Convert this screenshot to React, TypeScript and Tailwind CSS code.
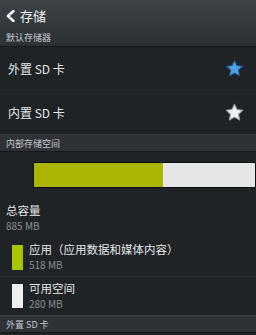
import React from "react";

const Star = ({ fill, stroke }: { fill: string; stroke: string }) => (
  <svg width="21" height="21" viewBox="0 0 24 24">
    <path
      d="M12 2.5l2.9 6.1 6.6.8-4.9 4.6 1.3 6.6L12 17.3l-5.9 3.3 1.3-6.6-4.9-4.6 6.6-.8z"
      fill={fill}
      stroke={stroke}
      strokeWidth="1.2"
      strokeLinejoin="round"
    />
  </svg>
);

const SectionHeader = ({ label }: { label: string }) => (
  <div className="h-[18px] flex items-center px-[6px] bg-[#2e3236] border-t border-[#3a3f43] border-b border-b-[#15181a]">
    <span className="text-[9px] leading-none text-[#c4c8cc]">{label}</span>
  </div>
);

export default function App() {
  return (
    <div
      className="w-[256px] h-[335px] overflow-hidden bg-[#1f2326] flex flex-col"
      style={{ fontFamily: '"Noto Sans CJK SC", "Noto Sans", sans-serif' }}
    >
      <div className="h-[47px] bg-gradient-to-b from-[#3d4348] to-[#2b3034] border-b border-[#15181a] flex flex-col">
        <div className="h-[30px] flex items-center pl-[6px] gap-[5px] pt-[2px]">
          <svg width="9" height="12" viewBox="0 0 9 12">
            <path d="M7.5 1L2 6l5.5 5" fill="none" stroke="#f2f2f2" strokeWidth="2.6" strokeLinecap="round" strokeLinejoin="round" />
          </svg>
          <span className="text-[13px] leading-none text-[#f0f0f0]">存储</span>
        </div>
        <div className="h-[17px] flex items-center px-[6px]">
          <span className="text-[9px] leading-none text-[#c8ccd0]">默认存储器</span>
        </div>
      </div>
      <div className="h-[44px] flex items-center justify-between pl-[8px] pr-[11px] border-b border-[#262a2e]">
        <span className="text-[12px] leading-none text-[#e4e6e8]">外置 SD 卡</span>
        <Star fill="#4e9fe6" stroke="#1c4b78" />
      </div>
      <div className="h-[43px] flex items-center justify-between pl-[8px] pr-[11px]">
        <span className="text-[12px] leading-none text-[#e4e6e8]">内置 SD 卡</span>
        <Star fill="#eef1f2" stroke="#9aa0a4" />
      </div>
      <SectionHeader label="内部存储空间" />
      <div className="h-[46px] flex items-center pl-[33px]">
        <div className="flex w-full h-[26px] border border-[#0c0e0f]">
          <div className="w-[129px] h-full bg-[#a9b500]" />
          <div className="flex-1 h-full bg-[#e6e6e8]" />
        </div>
      </div>
      <div className="h-[40px] flex flex-col justify-center pl-[6px] gap-[4px]">
        <span className="text-[11.5px] leading-none text-[#e4e6e8]">总容量</span>
        <span className="text-[10px] leading-none text-[#8a8e92]">885 MB</span>
      </div>
      <div className="h-[39px] flex items-center pl-[12px] gap-[6px] border-b border-[#2e3236]">
        <div className="w-[11px] h-[25px] bg-[#a9c400]" />
        <div className="flex flex-col gap-[4px]">
          <span className="text-[11.5px] leading-none text-[#e4e6e8]">应用（应用数据和媒体内容）</span>
          <span className="text-[10px] leading-none text-[#8a8e92]">518 MB</span>
        </div>
      </div>
      <div className="h-[38px] flex items-center pl-[12px] gap-[6px]">
        <div className="w-[11px] h-[24px] bg-[#eceef0]" />
        <div className="flex flex-col gap-[4px]">
          <span className="text-[11.5px] leading-none text-[#e4e6e8]">可用空间</span>
          <span className="text-[10px] leading-none text-[#8a8e92]">280 MB</span>
        </div>
      </div>
      <SectionHeader label="外置 SD 卡" />
    </div>
  );
}
